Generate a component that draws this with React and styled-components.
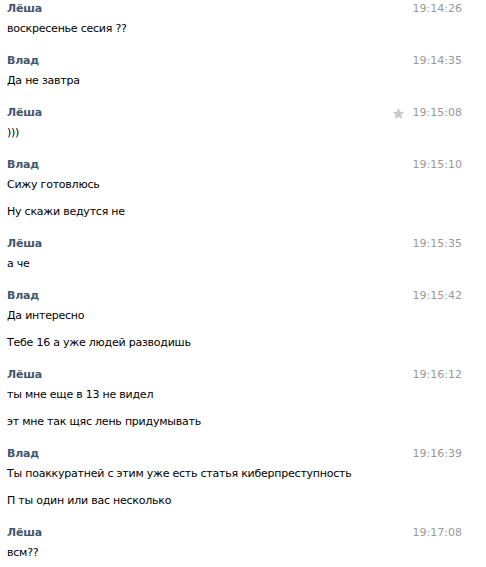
import React from "react";
import styled, { createGlobalStyle } from "styled-components";

const Global = createGlobalStyle`
  html, body { margin: 0; padding: 0; background: #fff; }
  body { font-family: "DejaVu Sans", Tahoma, sans-serif; font-size: 11px; color: #000; }
`;

const History = styled.div`
  width: 486px;
  padding: 1px 24px 0 7px;
  box-sizing: border-box;
`;

const Group = styled.div`
  padding-bottom: 16px;
`;

const Header = styled.div`
  display: flex;
  align-items: center;
  justify-content: space-between;
  height: 16px;
  line-height: 16px;
`;

const Name = styled.span`
  font-weight: bold;
  color: #42566e;
  letter-spacing: -0.2px;
`;

const Meta = styled.div`
  display: flex;
  align-items: center;
  gap: 8px;
  color: #999;
`;

const Time = styled.span`
  color: #999;
`;

const Messages = styled.div`
  display: flex;
  flex-direction: column;
  gap: 11px;
  margin-top: 4px;
`;

const Text = styled.div`
  line-height: 16px;
  height: 16px;
  white-space: nowrap;
  letter-spacing: -0.23px;
`;

const Star = () => (
  <svg width="13" height="13" viewBox="0 0 24 24">
    <path
      d="M12 1.5l3.1 7.2 7.7.7-5.9 5.1 1.8 7.6L12 18.1 5.3 22.1l1.8-7.6L1.2 9.4l7.7-.7z"
      fill="#c8c8c8"
    />
  </svg>
);

const data = [
  { name: "Лёша", time: "19:14:26", msgs: ["воскресенье сесия ??"] },
  { name: "Влад", time: "19:14:35", msgs: ["Да не завтра"] },
  { name: "Лёша", time: "19:15:08", star: true, msgs: [")))"] },
  { name: "Влад", time: "19:15:10", msgs: ["Сижу готовлюсь", "Ну скажи ведутся не"] },
  { name: "Лёша", time: "19:15:35", msgs: ["а че"] },
  { name: "Влад", time: "19:15:42", msgs: ["Да интересно", "Тебе 16 а уже людей разводишь"] },
  { name: "Лёша", time: "19:16:12", msgs: ["ты мне еще в 13 не видел", "эт мне так щяс лень придумывать"] },
  { name: "Влад", time: "19:16:39", msgs: ["Ты поаккуратней с этим уже есть статья киберпреступность", "П ты один или вас несколько"] },
  { name: "Лёша", time: "19:17:08", msgs: ["всм??"] },
];

export default function App() {
  return (
    <>
      <Global />
      <History>
        {data.map((g, i) => (
          <Group key={i}>
            <Header>
              <Name>{g.name}</Name>
              <Meta>
                {g.star && <Star />}
                <Time>{g.time}</Time>
              </Meta>
            </Header>
            <Messages>
              {g.msgs.map((m, j) => (
                <Text key={j}>{m}</Text>
              ))}
            </Messages>
          </Group>
        ))}
      </History>
    </>
  );
}
